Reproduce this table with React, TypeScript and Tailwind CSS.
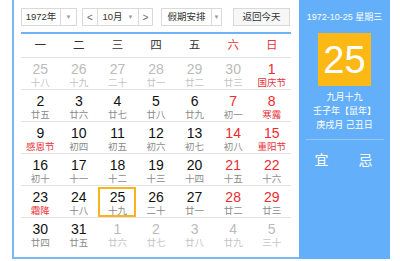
import React from "react";

type Cell = { n: number; l: string; o?: boolean; r?: boolean; lr?: boolean; sel?: boolean };

const rows: Cell[][] = [
  [
    { n: 25, l: "十八", o: true },
    { n: 26, l: "十九", o: true },
    { n: 27, l: "二十", o: true },
    { n: 28, l: "廿一", o: true },
    { n: 29, l: "廿二", o: true },
    { n: 30, l: "廿三", o: true },
    { n: 1, l: "国庆节", r: true, lr: true },
  ],
  [
    { n: 2, l: "廿五" },
    { n: 3, l: "廿六" },
    { n: 4, l: "廿七" },
    { n: 5, l: "廿八" },
    { n: 6, l: "廿九" },
    { n: 7, l: "初一", r: true },
    { n: 8, l: "寒露", r: true, lr: true },
  ],
  [
    { n: 9, l: "感恩节", lr: true },
    { n: 10, l: "初四" },
    { n: 11, l: "初五" },
    { n: 12, l: "初六" },
    { n: 13, l: "初七" },
    { n: 14, l: "初八", r: true },
    { n: 15, l: "重阳节", r: true, lr: true },
  ],
  [
    { n: 16, l: "初十" },
    { n: 17, l: "十一" },
    { n: 18, l: "十二" },
    { n: 19, l: "十三" },
    { n: 20, l: "十四" },
    { n: 21, l: "十五", r: true },
    { n: 22, l: "十六", r: true },
  ],
  [
    { n: 23, l: "霜降", lr: true },
    { n: 24, l: "十八" },
    { n: 25, l: "十九", sel: true },
    { n: 26, l: "二十" },
    { n: 27, l: "廿一" },
    { n: 28, l: "廿二", r: true },
    { n: 29, l: "廿三", r: true },
  ],
  [
    { n: 30, l: "廿四" },
    { n: 31, l: "廿五" },
    { n: 1, l: "廿六", o: true },
    { n: 2, l: "廿七", o: true },
    { n: 3, l: "廿八", o: true },
    { n: 4, l: "廿九", o: true },
    { n: 5, l: "三十", o: true },
  ],
];

const weekdays = ["一", "二", "三", "四", "五", "六", "日"];

function Arrow() {
  return <span className="text-[6px] leading-none text-[#999]">▼</span>;
}

export default function App() {
  return (
    <div className="w-[400px] h-[261px] bg-white overflow-hidden font-['Liberation_Sans','Noto_Sans_CJK_SC',sans-serif]">
      <div className="ml-[12px] flex w-[378px] h-[259px]">
        <div className="w-[287px] h-[259px] border-l-2 border-b-2 border-[#7ab9f6] pl-[7px] pt-[8px]">
          <div className="flex h-[18px] text-[9.5px] text-[#333]">
            <div className="flex w-[56px] border border-[#d9d9d9] bg-white">
              <div className="w-[38px] flex items-center justify-center">1972年</div>
              <div className="flex-1 flex items-center justify-center border-l border-[#d9d9d9]">
                <Arrow />
              </div>
            </div>
            <div className="ml-[5px] flex w-[71px] border border-[#d9d9d9] bg-white">
              <div className="w-[15px] flex items-center justify-center border-r border-[#d9d9d9] text-[10px] text-[#666]">&lt;</div>
              <div className="w-[40px] flex items-center justify-center gap-[5px]">
                <span>10月</span>
                <Arrow />
              </div>
              <div className="flex-1 flex items-center justify-center border-l border-[#d9d9d9] text-[10px] text-[#666]">&gt;</div>
            </div>
            <div className="ml-[8px] flex w-[61px] border border-[#d9d9d9] bg-white">
              <div className="w-[49px] flex items-center justify-center">假期安排</div>
              <div className="flex-1 flex items-center justify-center border-l border-[#d9d9d9]">
                <Arrow />
              </div>
            </div>
            <div className="ml-[11px] w-[57px] flex items-center justify-center border border-[#d9d9d9] bg-[#f7f7f7]">
              返回今天
            </div>
          </div>

          <div className="mt-[6px] w-[270px] border-t-2 border-[#6fb4f7]">
            <div className="grid grid-cols-7 h-[24px] border-b border-[#e2e2e2] text-[11.5px]">
              {weekdays.map((w, i) => (
                <div
                  key={w}
                  className={`flex items-center justify-center ${i >= 5 ? "text-[#e8333a]" : "text-[#333]"}`}
                >
                  {w}
                </div>
              ))}
            </div>
            {rows.map((row, ri) => (
              <div
                key={ri}
                className={`grid grid-cols-7 h-[32px] ${ri < rows.length - 1 ? "border-b border-[#e2e2e2]" : ""}`}
              >
                {row.map((c, ci) => {
                  const numColor = c.o ? "text-[#bbbbbb]" : c.r ? "text-[#ee2a30]" : "text-[#111]";
                  const lunColor = c.o ? "text-[#c4c4c4]" : c.lr ? "text-[#e8333a]" : "text-[#8a8a8a]";
                  return (
                    <div key={ci} className="relative flex flex-col items-center pt-[3px]">
                      {c.sel && (
                        <div className="absolute top-[1px] bottom-0 left-0 right-[1px] border-2 border-[#f8b41c]" />
                      )}
                      <div className={`text-[14px] leading-[16px] ${numColor}`}>{c.n}</div>
                      <div className={`text-[9.5px] leading-[11px] ${lunColor}`}>{c.l}</div>
                    </div>
                  );
                })}
              </div>
            ))}
          </div>
        </div>

        <div className="w-[91px] h-[259px] bg-[#63affa] flex flex-col items-center text-white">
          <div className="mt-[11px] text-[9px] leading-[12px]">1972-10-25 星期三</div>
          <div className="mt-[10px] w-[53px] h-[53px] bg-[#fcb815] flex items-center justify-center text-[38px] leading-none">
            25
          </div>
          <div className="mt-[4px] text-[9px] leading-[14px] text-center">
            <div>九月十九</div>
            <div>壬子年【鼠年】</div>
            <div>庚戌月 己丑日</div>
          </div>
          <div className="mt-[7px] w-[78px] h-px bg-[#93c9fb]" />
          <div className="mt-[12px] flex gap-[30px] text-[14px] leading-[16px] pr-[2px]">
            <span>宜</span>
            <span>忌</span>
          </div>
        </div>
      </div>
    </div>
  );
}
